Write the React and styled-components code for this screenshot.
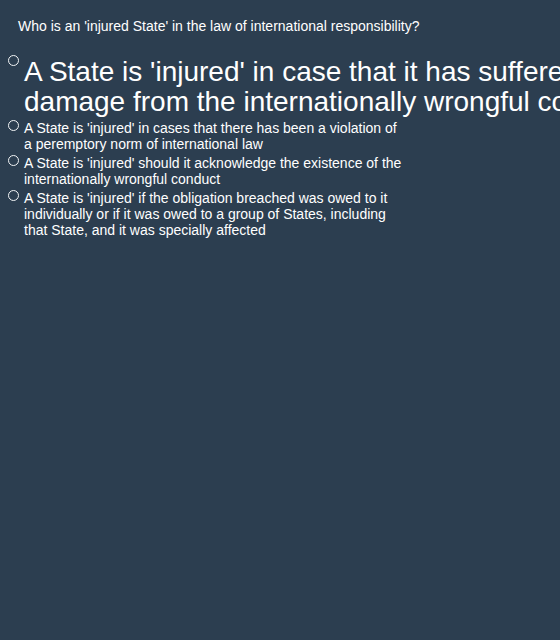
import React from 'react'
import styled, { createGlobalStyle } from 'styled-components'

const GlobalStyle = createGlobalStyle`
  html, body {
    margin: 0;
    padding: 0;
    overflow: hidden;
  }
  body {
    background-color: #2c3e50;
    color: #ffffff;
    font-family: "Liberation Sans", Arial, sans-serif;
  }
`

const Page = styled.div`
  min-height: 640px;
  background-color: #2c3e50;
`

const Question = styled.div`
  padding: 18px 18px 0;
  font-size: 14px;
  line-height: 16px;
`

const OptionList = styled.ul`
  list-style: none;
  margin: 20px 0 0;
  padding: 0 0 0 8px;
  display: flex;
  flex-direction: column;
  gap: 3px;
`

const OptionRow = styled.li`
  display: flex;
  align-items: flex-start;
  gap: 5px;
  cursor: pointer;
`

const Radio = styled.span`
  flex: none;
  box-sizing: border-box;
  width: 11px;
  height: 11px;
  margin-top: ${({ big }) => (big ? '1px' : '0')};
  border: 1px solid #f2f4f5;
  border-radius: 50%;
`

const Label = styled.span`
  flex: none;
  width: ${({ big }) => (big ? '640px' : '380px')};
  margin-top: ${({ big }) => (big ? '3px' : '0')};
  font-size: ${({ big }) => (big ? '28px' : '14px')};
  line-height: ${({ big }) => (big ? '30px' : '16px')};
`

const options = [
  "A State is 'injured' in case that it has suffered damage from the internationally wrongful conduct",
  "A State is 'injured' in cases that there has been a violation of a peremptory norm of international law",
  "A State is 'injured' should it acknowledge the existence of the internationally wrongful conduct",
  "A State is 'injured' if the obligation breached was owed to it individually or if it was owed to a group of States, including that State, and it was specially affected",
]

export default function App() {
  const hovered = 0
  return (
    <Page>
      <GlobalStyle />
      <Question>Who is an 'injured State' in the law of international responsibility?</Question>
      <OptionList>
        {options.map((text, i) => (
          <OptionRow key={i}>
            <Radio big={i === hovered} />
            <Label big={i === hovered}>{text}</Label>
          </OptionRow>
        ))}
      </OptionList>
    </Page>
  )
}
